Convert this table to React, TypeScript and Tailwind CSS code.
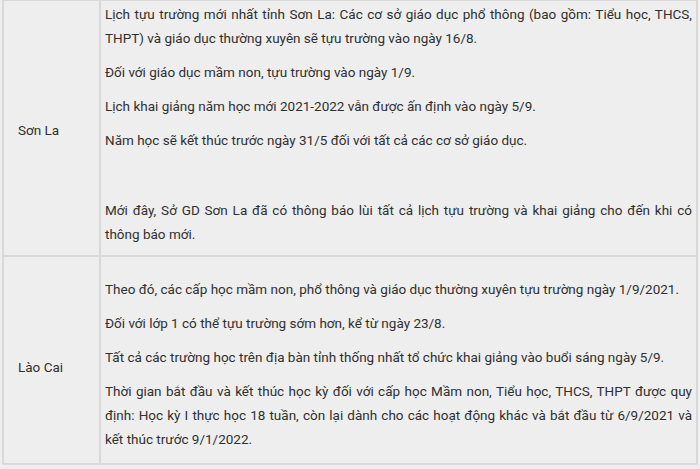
const rows = [
  {
    name: 'Sơn La',
    pad: 'pt-[1px]',
    namePad: 'pt-[4px]',
    paras: [
      'Lịch tựu trường mới nhất tỉnh Sơn La: Các cơ sở giáo dục phổ thông (bao gồm: Tiểu học, THCS, THPT) và giáo dục thường xuyên sẽ tựu trường vào ngày 16/8.',
      'Đối với giáo dục mầm non, tựu trường vào ngày 1/9.',
      'Lịch khai giảng năm học mới 2021-2022 vẫn được ấn định vào ngày 5/9.',
      'Năm học sẽ kết thúc trước ngày 31/5 đối với tất cả các cơ sở giáo dục.',
      '\u00a0',
      'Mới đây, Sở GD Sơn La đã có thông báo lùi tất cả lịch tựu trường và khai giảng cho đến khi có thông báo mới.',
    ],
  },
  {
    name: 'Lào Cai',
    pad: 'pt-[20px]',
    namePad: 'pt-[14px]',
    paras: [
      'Theo đó, các cấp học mầm non, phổ thông và giáo dục thường xuyên tựu trường ngày 1/9/2021.',
      'Đối với lớp 1 có thể tựu trường sớm hơn, kể từ ngày 23/8.',
      'Tất cả các trường học trên địa bàn tỉnh thống nhất tổ chức khai giảng vào buổi sáng ngày 5/9.',
      'Thời gian bắt đầu và kết thúc học kỳ đối với cấp học Mầm non, Tiểu học, THCS, THPT được quy định: Học kỳ I thực học 18 tuần, còn lại dành cho các hoạt động khác và bắt đầu từ 6/9/2021 và kết thúc trước 9/1/2022.',
    ],
  },
];

export default function App() {
  return (
    <div className="w-[700px] h-[469px] overflow-hidden bg-[#eeeeee] font-['Roboto',sans-serif] text-[13.5px] text-[#303030]">
      <div className="ml-[2px] w-[696px] border-2 border-t-[1px] border-[#d9d9d9]">
        {rows.map((row, i) => (
          <div
            key={row.name}
            className={`grid grid-cols-[97px_1fr] ${i > 0 ? 'border-t-2 border-[#d9d9d9]' : ''} ${i === 0 ? 'h-[254px]' : 'h-[208px]'}`}
          >
            <div className={`flex items-center border-r-2 border-[#d9d9d9] pl-[14px] ${row.namePad}`}>{row.name}</div>
            <div className={`${row.pad} pl-[4px] pr-[4px]`}>
              {row.paras.map((p, j) => (
                <p key={j} className={`text-justify leading-[24px] ${p === '\u00a0' ? 'mb-[12px]' : 'mb-[10px]'}`}>
                  {p}
                </p>
              ))}
            </div>
          </div>
        ))}
      </div>
    </div>
  );
}
